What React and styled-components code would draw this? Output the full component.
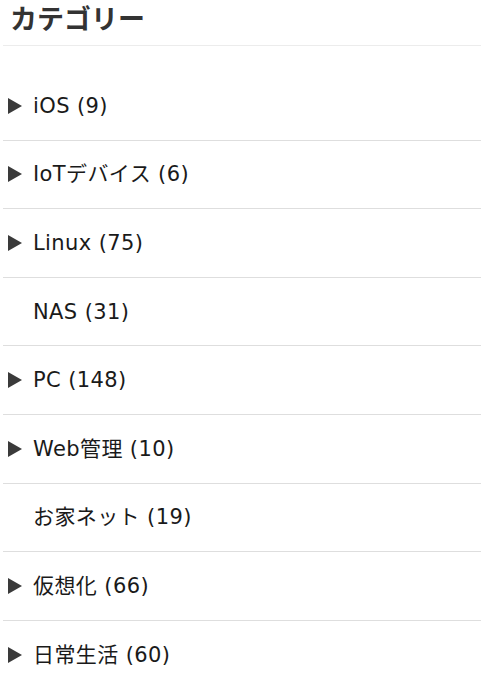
import React from 'react';
import styled, { createGlobalStyle } from 'styled-components';

const GlobalStyle = createGlobalStyle`
  body {
    margin: 0;
    background: #fff;
    font-family: "DejaVu Sans", "Noto Sans CJK JP", sans-serif;
  }
`;

const categories = [
  { name: 'iOS', count: 9, children: true },
  { name: 'IoTデバイス', count: 6, children: true },
  { name: 'Linux', count: 75, children: true },
  { name: 'NAS', count: 31, children: false },
  { name: 'PC', count: 148, children: true },
  { name: 'Web管理', count: 10, children: true },
  { name: 'お家ネット', count: 19, children: false },
  { name: '仮想化', count: 66, children: true },
  { name: '日常生活', count: 60, children: true },
];

const App = () => {
  return (
    <Widget>
      <GlobalStyle />
      <Title>カテゴリー</Title>
      <List>
        {categories.map(cat => (
          <Item key={cat.name}>
            <Arrow visible={cat.children} />
            <Label>{cat.name} ({cat.count})</Label>
          </Item>
        ))}
      </List>
    </Widget>
  );
};

const Widget = styled.div`
  padding: 0 5px 0 3px;
`;

const Title = styled.h2`
  margin: 0;
  height: 46px;
  padding: 0 0 0 7px;
  box-sizing: border-box;
  border-bottom: 1px solid #ececec;
  font-family: "Noto Sans CJK JP", sans-serif;
  font-size: 27px;
  font-weight: 700;
  line-height: 35px;
  color: #333;
`;

const List = styled.ul`
  list-style: none;
  margin: 26px 0 0 0;
  padding: 0;
`;

const Item = styled.li`
  display: flex;
  align-items: center;
  height: 67.6px;
  padding-left: 5px;
  border-bottom: 1px solid #dedede;
`;

const Arrow = styled.span`
  flex: none;
  width: 0;
  height: 0;
  margin-right: 11px;
  border-top: 8px solid transparent;
  border-bottom: 8px solid transparent;
  border-left: 14px solid ${p => (p.visible ? '#3a3a3a' : 'transparent')};
`;

const Label = styled.span`
  padding-top: 1px;
  font-size: 21px;
  letter-spacing: 0.4px;
  color: #1a1a1a;
  line-height: 1;
`;

export default App;
